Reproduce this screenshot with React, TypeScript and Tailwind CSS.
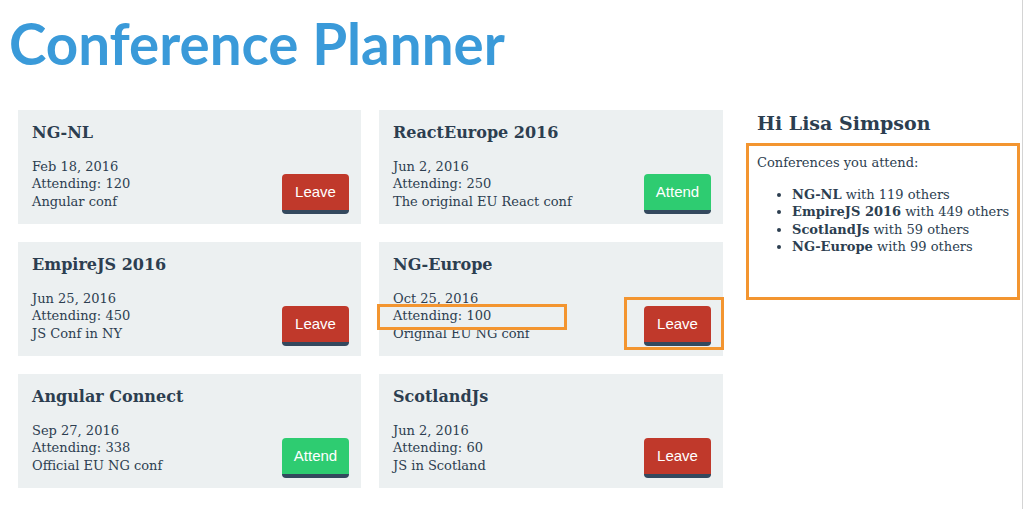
import React from "react";

type Conf = { name: string; date: string; attending: number; desc: string; going: boolean };

const confs: Conf[] = [
  { name: "NG-NL", date: "Feb 18, 2016", attending: 120, desc: "Angular conf", going: true },
  { name: "ReactEurope 2016", date: "Jun 2, 2016", attending: 250, desc: "The original EU React conf", going: false },
  { name: "EmpireJS 2016", date: "Jun 25, 2016", attending: 450, desc: "JS Conf in NY", going: true },
  { name: "NG-Europe", date: "Oct 25, 2016", attending: 100, desc: "Original EU NG conf", going: true },
  { name: "Angular Connect", date: "Sep 27, 2016", attending: 338, desc: "Official EU NG conf", going: false },
  { name: "ScotlandJs", date: "Jun 2, 2016", attending: 60, desc: "JS in Scotland", going: true },
];

const serif = { fontFamily: '"DejaVu Serif", serif' } as const;

function Card({ c }: { c: Conf }) {
  return (
    <div className="bg-[#ecf0f1] h-[114px] pt-[11px] pl-[14px] pr-[12px] pb-[10px] flex flex-col text-[#2c3e50]">
      <div className="font-bold text-[16px] leading-[24px]">{c.name}</div>
      <div className="flex items-end justify-between mt-auto">
        <div className="text-[13px] leading-[17.5px] mb-[4px]">
          <div>{c.date}</div>
          <div>Attending: {c.attending}</div>
          <div>{c.desc}</div>
        </div>
        <button
          className={`w-[67px] h-[40px] rounded-[4px] border-b-4 border-[#34495e] text-white text-[15px] ${
            c.going ? "bg-[#c0392b]" : "bg-[#2ecc71]"
          }`}
          style={{ fontFamily: '"Liberation Sans", Arial, sans-serif' }}
        >
          {c.going ? "Leave" : "Attend"}
        </button>
      </div>
    </div>
  );
}

export default function App() {
  const mine = confs.filter((c) => c.going);
  const order = ["NG-NL", "EmpireJS 2016", "ScotlandJs", "NG-Europe"];
  const list = order.map((n) => mine.find((c) => c.name === n)!);
  return (
    <div className="relative w-[1023px] h-[509px] bg-white border-r border-[#d4d4d4] overflow-hidden" style={serif}>
      <h1
        className="pl-[9px] pt-[3px] h-[110px] text-[56.5px] leading-[80px] font-bold text-[#3a9ad9]"
        style={{ fontFamily: "Lato, sans-serif" }}
      >
        Conference Planner
      </h1>
      <div className="flex pl-[18px]">
        <div className="grid grid-cols-[343px_344px] gap-[18px]">
          {confs.map((c) => (
            <Card key={c.name} c={c} />
          ))}
        </div>
        <div className="ml-[23px] w-[274px] text-[#2c3e50]">
          <div className="pl-[11px] font-bold text-[19px] leading-[26px]">Hi Lisa Simpson</div>
          <div className="mt-[7px] h-[157px] border-[3px] border-[#f39530] pl-[8px] pt-[8px] text-[13px] leading-[17.5px]">
            <div>Conferences you attend:</div>
            <ul className="list-disc pl-[35px] mt-[14px]">
              {list.map((c) => (
                <li key={c.name}>
                  <span className="font-bold">{c.name}</span> with {c.attending - 1} others
                </li>
              ))}
            </ul>
          </div>
        </div>
      </div>
      <div className="absolute left-[377px] top-[304px] w-[190px] h-[26px] border-[3px] border-[#f39530]" />
      <div className="absolute left-[624px] top-[297px] w-[100px] h-[53px] border-[3px] border-[#f39530]" />
    </div>
  );
}
